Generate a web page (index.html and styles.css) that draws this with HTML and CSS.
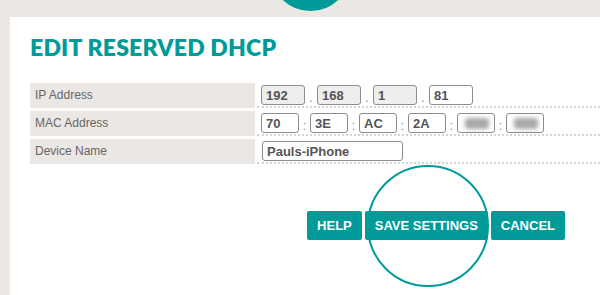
FILE: index.html
```html
<!DOCTYPE html>
<html lang="en">
<head>
  <meta charset="UTF-8">
  <meta name="viewport" content="width=device-width, initial-scale=1.0">
  <title>Edit Reserved DHCP</title>
  <link rel="stylesheet" href="styles.css">
</head>
<body>
  <div class="tab-dot"></div>

  <div class="panel">
    <h1>EDIT RESERVED DHCP</h1>

    <div class="form-table">
      <div class="label">IP Address</div>
      <div class="value">
        <input class="field ip" type="text" value="192" disabled>
        <span class="sep">.</span>
        <input class="field ip" type="text" value="168" disabled>
        <span class="sep">.</span>
        <input class="field ip" type="text" value="1" disabled>
        <span class="sep">.</span>
        <input class="field ip" type="text" value="81">
      </div>

      <div class="label">MAC Address</div>
      <div class="value">
        <input class="field mac" type="text" value="70">
        <span class="sep">:</span>
        <input class="field mac" type="text" value="3E">
        <span class="sep">:</span>
        <input class="field mac" type="text" value="AC">
        <span class="sep">:</span>
        <input class="field mac" type="text" value="2A">
        <span class="sep">:</span>
        <div class="field mac"><span class="blur"></span></div>
        <span class="sep">:</span>
        <div class="field mac"><span class="blur"></span></div>
      </div>

      <div class="label">Device Name</div>
      <div class="value">
        <input class="field name" type="text" value="Pauls-iPhone">
      </div>
    </div>

    <div class="actions">
      <button>HELP</button>
      <button>SAVE SETTINGS</button>
      <button>CANCEL</button>
    </div>
  </div>

  <!-- highlight ring around the save button -->
  <div class="ring"></div>
</body>
</html>
```

FILE: styles.css
```css
/* Global Styles */
* {
  margin: 0;
  padding: 0;
  box-sizing: border-box;
}

body {
  background: #ebe7e4;
  font-family: "Liberation Sans", Arial, sans-serif;
  height: 295px;
  overflow: hidden;
  padding-top: 17px;
}

.tab-dot {
  position: absolute;
  left: 270px;
  top: -70px;
  width: 81px;
  height: 81px;
  border-radius: 50%;
  background: #009b98;
}

.panel {
  background: #ffffff;
  margin-left: 10px;
  height: 278px;
  padding: 17px 0 0 20px;
}

h1 {
  font-family: Lato, "Liberation Sans", sans-serif;
  font-weight: 800;
  font-size: 23px;
  line-height: 27px;
  color: #009b98;
  letter-spacing: 0.2px;
  margin-bottom: 22px;
}

.form-table {
  display: grid;
  grid-template-columns: 225px 1fr;
  column-gap: 2px;
  row-gap: 3px;
}

.label {
  background: #ebe7e4;
  height: 25px;
  padding-left: 5px;
  font-size: 12px;
  line-height: 25px;
  color: #666;
}

.value {
  display: flex;
  align-items: flex-start;
  height: 25px;
  padding: 2px 0 0 4px;
  border-bottom: 2px dotted #d4d4d4;
}

.field {
  height: 20px;
  border: 1px solid #8c8c8c;
  border-radius: 3px;
  background: #fff;
  padding: 0 4px;
  font-family: "Liberation Sans", Arial, sans-serif;
  font-size: 13px;
  font-weight: bold;
  color: #555;
  outline: none;
}

.field:disabled {
  background: #eeeeee;
  color: #555;
  -webkit-text-fill-color: #555;
  opacity: 1;
}

.field.ip {
  width: 44px;
}

.field.mac {
  width: 38px;
}

.field.name {
  width: 141px;
  margin-left: 1px;
}

div.field {
  display: flex;
  align-items: center;
}

.blur {
  display: block;
  width: 24px;
  height: 11px;
  margin-left: 3px;
  background: #a8a8a8;
  border-radius: 3px;
  filter: blur(2px);
}

.sep {
  width: 12px;
  text-align: center;
  font-size: 12px;
  line-height: 26px;
  color: #888;
}

.mac + .sep {
  width: 11px;
}

.actions {
  display: flex;
  justify-content: flex-end;
  gap: 3px;
  margin-top: 47px;
  margin-right: 35px;
}

button {
  height: 29px;
  padding: 0 10px;
  background: #009b98;
  color: #fff;
  border: none;
  border-radius: 2px;
  font-family: "Liberation Sans", Arial, sans-serif;
  font-size: 13px;
  font-weight: bold;
  cursor: pointer;
}

.ring {
  position: absolute;
  left: 367px;
  top: 165px;
  width: 122px;
  height: 122px;
  border: 2px solid #009b98;
  border-radius: 50%;
  pointer-events: none;
}
```
